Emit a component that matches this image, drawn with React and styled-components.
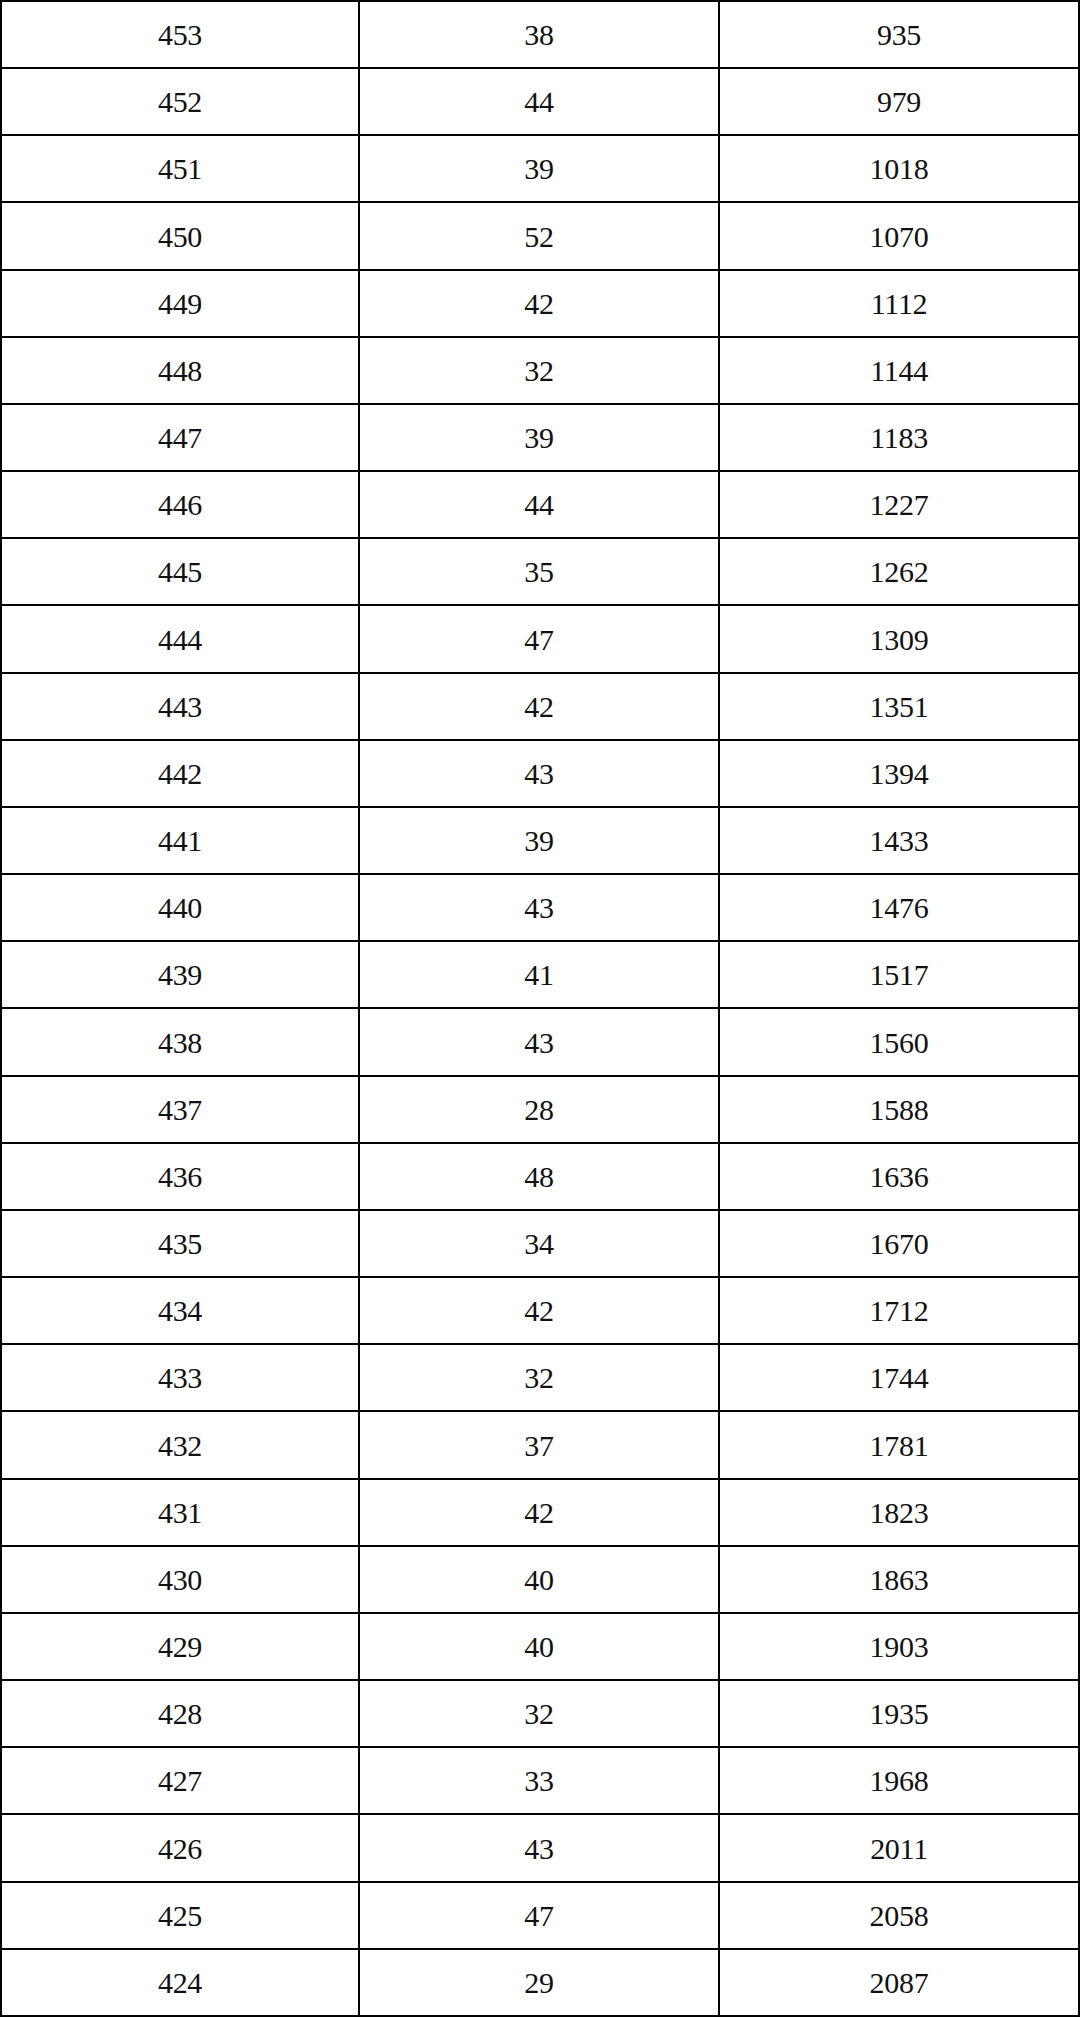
import styled, { createGlobalStyle } from "styled-components";

const rows = [
  [453, 38, 935],
  [452, 44, 979],
  [451, 39, 1018],
  [450, 52, 1070],
  [449, 42, 1112],
  [448, 32, 1144],
  [447, 39, 1183],
  [446, 44, 1227],
  [445, 35, 1262],
  [444, 47, 1309],
  [443, 42, 1351],
  [442, 43, 1394],
  [441, 39, 1433],
  [440, 43, 1476],
  [439, 41, 1517],
  [438, 43, 1560],
  [437, 28, 1588],
  [436, 48, 1636],
  [435, 34, 1670],
  [434, 42, 1712],
  [433, 32, 1744],
  [432, 37, 1781],
  [431, 42, 1823],
  [430, 40, 1863],
  [429, 40, 1903],
  [428, 32, 1935],
  [427, 33, 1968],
  [426, 43, 2011],
  [425, 47, 2058],
  [424, 29, 2087],
];

const GlobalStyle = createGlobalStyle`
  html, body {
    margin: 0;
    padding: 0;
    background: #fff;
  }
`;

function App() {
  return (
    <>
      <GlobalStyle />
      <ScoreGrid>
        {rows.map((row) =>
          row.map((value, i) => <Cell key={`${row[0]}-${i}`}>{value}</Cell>)
        )}
      </ScoreGrid>
    </>
  );
}

let ScoreGrid = styled.div`
  display: grid;
  grid-template-columns: 358px 360px 360px;
  grid-template-rows: repeat(30, 1fr);
  width: 1080px;
  height: 2017px;
  box-sizing: border-box;
  border-top: 2px solid #000;
  border-left: 2px solid #000;
  background: #fff;
`;

let Cell = styled.div`
  display: flex;
  align-items: center;
  justify-content: center;
  box-sizing: border-box;
  border-right: 2px solid #000;
  border-bottom: 2px solid #000;
  padding-top: 1px;
  font-family: "Liberation Serif", "Times New Roman", serif;
  font-size: 30px;
  letter-spacing: -0.3px;
  color: #111;
`;

export default App;
